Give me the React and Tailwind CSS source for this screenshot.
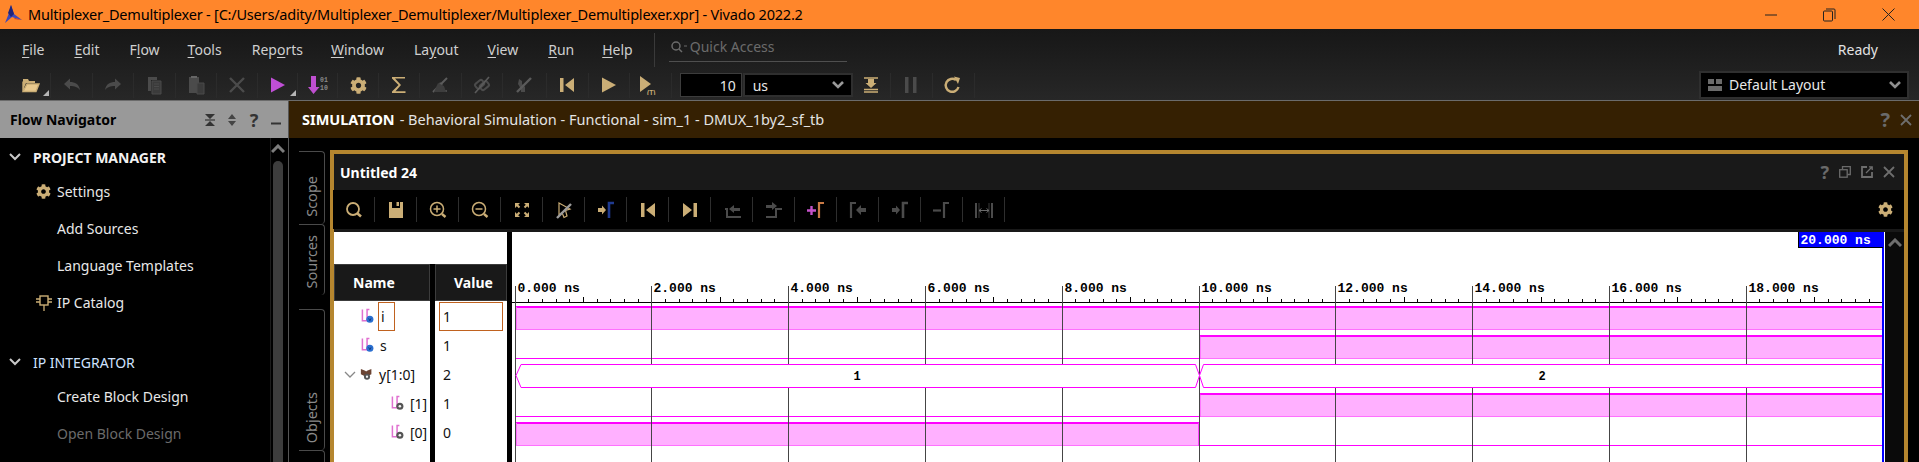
import React from "react";
import { FaCog } from "react-icons/fa";

const TAN = "#cbae76";
const GR = "#4b4b4b";

const I = ({ children, w = 20, h = 20, vb }) => (
  <svg width={w} height={h} viewBox={vb || `0 0 ${w} ${h}`} fill="none">{children}</svg>
);

const Corner = () => (
  <span className="absolute right-[1px] bottom-[2px] w-0 h-0 border-l-[6px] border-l-transparent border-b-[6px] border-b-[#b5b5b5]" />
);

const Folder = () => (
  <I>
    <path d="M3 4h5l1 2h6v2H6L3.500 14H3z" fill={TAN} />
    <path d="M3 16V6.500M7 9h12l-3 7.500H3z" stroke={TAN} strokeWidth="1.400" fill="#e8c98e" />
  </I>
);
const Undo = ({ flip }) => (
  <I>
    <g transform={flip ? "translate(20 0) scale(-1 1)" : undefined}>
      <path d="M2 9l6-5.500V7c5 0 9 2 10 8-2.500-3-5-4-10-4v3.500z" fill={GR} />
    </g>
  </I>
);
const Doc = () => (
  <I>
    <path d="M4 2h9v3H7v11H4z" fill={GR} />
    <path d="M8 6h9v13H8z" fill="#3b3b3b" stroke={GR} />
    <path d="M10 9h5M10 11.500h5M10 14h5" stroke={GR} />
  </I>
);
const Paste = () => (
  <I>
    <path d="M3 2h10v16H3z" fill={GR} />
    <path d="M5 1h6v2H5z" fill="#666" />
    <path d="M11 8h7v11h-7z" fill="#3b3b3b" stroke={GR} />
  </I>
);
const Cross = ({ c = GR, s = 2.400 }) => (
  <I><path d="M3 3l14 14M17 3L3 17" stroke={c} strokeWidth={s} /></I>
);
const Play = ({ c = TAN }) => (
  <I><path d="M3 2.500L17 10 3 17.500z" fill={c} /></I>
);
const Bits = () => (
  <I w={24}>
    <path d="M5 1h5v11h3.500L7.500 19 2 12h3z" fill="#bf4fd0" />
    <text x="14" y="7" fontSize="6.500" fontFamily="'Liberation Mono', monospace" fontWeight="700" fill="#8a8a8a">01</text>
    <text x="14" y="15" fontSize="6.500" fontFamily="'Liberation Mono', monospace" fontWeight="700" fill="#8a8a8a">10</text>
  </I>
);
const Sigma = () => (
  <I><path d="M16 3.500V2H3v1.500L9.500 10 3 16.500V18h13.500v-1.800H6.500L12 10 6 3.500z" fill={TAN} /></I>
);
const Tri = () => (
  <I>
    <path d="M4 17h13v-2H9l4-6-3-2z" fill={GR} />
    <path d="M3 17L17 3" stroke="#5c5c5c" strokeWidth="2" />
    <path d="M4 17l4-9 6 3 2 6z" fill="#3e3e3e" />
  </I>
);
const Chain = () => (
  <I>
    <rect x="3" y="6" width="9" height="6" rx="2" transform="rotate(-40 8 9)" stroke={GR} strokeWidth="2" />
    <rect x="8" y="8" width="9" height="6" rx="2" transform="rotate(-40 12 11)" stroke={GR} strokeWidth="2" />
    <path d="M3 18L17 2" stroke="#5a5a5a" strokeWidth="1.600" />
  </I>
);
const Wrench = () => (
  <I>
    <path d="M5 4l3 2v3l3 3v5H7v-3L4 9z" fill={GR} />
    <path d="M3 17L17 3" stroke="#5a5a5a" strokeWidth="2.400" />
  </I>
);
const Prev = () => (
  <I><path d="M3 3h3.500v14H3zM17 3v14L8 10z" fill={TAN} /></I>
);
const Next = () => (
  <I><path d="M13.500 3H17v14h-3.500zM3 3v14l9-7z" fill={TAN} /></I>
);
const PlayT = () => (
  <I w={24}>
    <path d="M2 1l11 8-11 8z" fill={TAN} />
    <text x="9" y="19.500" fontSize="6.500" fontWeight="700" fontFamily="'Liberation Sans', sans-serif" fill={TAN}>(T)</text>
  </I>
);
const Lines = () => (
  <I>
    <path d="M3 3h14M3 17h14M3 14.500h14" stroke={TAN} strokeWidth="1.300" />
    <path d="M7 4h6v4h2.500L10 13 4.500 8H7z" fill={TAN} />
  </I>
);
const Pause = () => (
  <I><path d="M4 2h3.500v16H4zM12 2h3.500v16H12z" fill={GR} /></I>
);
const Refresh = () => (
  <I>
    <path d="M15.500 12A6.500 6.500 0 1 1 13 5" stroke={TAN} strokeWidth="2.400" />
    <path d="M11 1.500l6 1.500-2 6z" fill={TAN} />
  </I>
);
const Search = () => (
  <I>
    <circle cx="9" cy="9" r="6" stroke={TAN} strokeWidth="1.800" />
    <path d="M13.500 13.500l3.500 3" stroke={TAN} strokeWidth="2.600" />
  </I>
);
const ZoomI = ({ plus }) => (
  <I>
    <circle cx="9" cy="9" r="6.500" stroke={TAN} strokeWidth="1.500" />
    <path d="M5.500 9h7" stroke={TAN} strokeWidth="1.500" />
    {plus && <path d="M9 5.500v7" stroke={TAN} strokeWidth="1.500" />}
    <path d="M14 14l3.500 3" stroke={TAN} strokeWidth="2.400" />
  </I>
);
const Floppy = () => (
  <I><path d="M3 2h3v6h8V2h3v16H3z" fill={TAN} /><path d="M10.500 2H13v4h-2.500z" fill={TAN} /></I>
);
const Fit = () => (
  <I>
    <path d="M3 3h5L3 8zM17 3h-5l5 5zM3 17h5l-5-5zM17 17h-5l5-5z" fill={TAN} />
    <path d="M4 4l3.500 3.500M16 4l-3.500 3.500M4 16l3.500-3.500M16 16l-3.500-3.500" stroke={TAN} strokeWidth="2" />
  </I>
);
const Cursor = () => (
  <I>
    <path d="M5 3l11 6-4.500 1.500L13 16l-3 1.500-2-5L5 15z" stroke={TAN} strokeWidth="1.200" />
    <path d="M3 18L17 4" stroke="#9c9c9c" strokeWidth="2.400" />
  </I>
);
const Edge = ({ a = TAN, c = "#1f3a8f" }) => (
  <I>
    <path d="M2 8h4V5.500l4 4.500-4 4.500V12H2z" fill={a} />
    <path d="M13 18V3h5" stroke={c} strokeWidth="2.600" />
  </I>
);
const StepL = () => (
  <I w={24}>
    <path d="M5 9h2v8h14" stroke={GR} strokeWidth="2" />
    <path d="M20 8h-6V5l-5 4 5 4v-2h6z" fill={GR} />
  </I>
);
const StepR = () => (
  <I w={24}>
    <path d="M4 17h10V9h6" stroke={GR} strokeWidth="2" />
    <path d="M4 5h6V2l5 4-5 4V8H4z" fill={GR} />
  </I>
);
const AddM = () => (
  <I w={24}>
    <path d="M3 10.500h9M7.500 6v9" stroke="#c552c9" strokeWidth="2.400" />
    <path d="M15 18V3h5" stroke="#c97a45" strokeWidth="2.200" />
  </I>
);
const EdgeL = () => (
  <I w={24}>
    <path d="M5 18V3h5" stroke={GR} strokeWidth="2.200" />
    <path d="M20 8h-5V5l-5 5 5 5v-3h5z" fill={GR} />
  </I>
);
const Minus = () => (
  <I w={24}>
    <path d="M3 10.500h8" stroke={GR} strokeWidth="2.200" />
    <path d="M14 18V3h5" stroke={GR} strokeWidth="2.200" />
  </I>
);
const Meas = () => (
  <I w={24}>
    <path d="M4 3v15M20 3v15" stroke={GR} strokeWidth="2" />
    <path d="M7 3v15M17 3v15" stroke="#383838" strokeWidth="1" />
    <path d="M7 10.500h10M7 10.500l2.500-2M7 10.500l2.500 2M17 10.500l-2.500-2M17 10.500l-2.500 2" stroke="#6a6a6a" />
  </I>
);

const Chev = ({ c = "#8f8f8f", w = 14, s = 2 }) => (
  <svg width={w} height="10" viewBox="0 0 14 10" fill="none"><path d="M2 2l5 5 5-5" stroke={c} strokeWidth={s} /></svg>
);
const ChevUp = ({ c = "#7c7c7c" }) => (
  <svg width="14" height="10" viewBox="0 0 14 10" fill="none"><path d="M1 8l6-6 6 6" stroke={c} strokeWidth="3" /></svg>
);

const Btn = ({ children, corner, sep = "border-[#2b2b2b]", w = "w-[41.4px]" }) => (
  <div className={`relative ${w} h-[25px] flex items-center justify-center border-r ${sep} shrink-0`}>
    {children}
    {corner && <Corner />}
  </div>
);
const WBtn = ({ children }) => (
  <div className="w-[42px] h-[25px] flex items-center justify-center border-r border-[#2e2e2e] shrink-0">{children}</div>
);

const U = ({ children }) => <span className="underline underline-offset-2">{children}</span>;

const menus = [
  [<><U>F</U>ile</>, "ml-[22px]"],
  [<><U>E</U>dit</>, "ml-[30px]"],
  [<>F<U>l</U>ow</>, "ml-[30px]"],
  [<><U>T</U>ools</>, "ml-[28px]"],
  [<>Rep<U>o</U>rts</>, "ml-[30px]"],
  [<><U>W</U>indow</>, "ml-[28px]"],
  [<>La<U>y</U>out</>, "ml-[30px]"],
  [<><U>V</U>iew</>, "ml-[29px]"],
  [<><U>R</U>un</>, "ml-[30px]"],
  [<><U>H</U>elp</>, "ml-[28px]"],
];

const NavRow = ({ h, cls = "", color = "text-[#e8e8e8]", icon, children }) => (
  <div className={`flex items-center ${h} ${cls} ${color}`}>
    <div className="w-[57px] pl-[30px] flex items-center justify-center shrink-0">{icon}</div>
    <span>{children}</span>
  </div>
);
const NavHead = ({ h, cls = "", bold, children }) => (
  <div className={`flex items-center ${h} ${cls} ${bold ? "font-bold text-[#f2f2f2]" : "text-[#cfe2ff]"}`}>
    <div className="w-[33px] pl-[8px] shrink-0"><Chev c="#c8c8c8" /></div>
    <span>{children}</span>
  </div>
);

const VTab = ({ h, cls = "", children }) => (
  <div className={`w-[26px] ${h} ${cls} pb-[7px] border-t border-r border-[#4a4a4a] rounded-tr-[4px] rounded-br-[4px] flex items-end justify-center shrink-0`}>
    <span className="text-[#8a8a8a] text-[14.5px] [writing-mode:vertical-rl] rotate-180 leading-none">{children}</span>
  </div>
);

const SigIcon = ({ dot = "#2a6fd0" }) => (
  <svg width="15" height="21" viewBox="0 0 15 21" fill="none">
    <path d="M1.500 3v12h5V3h2.500" stroke="#e070d0" strokeWidth="1.600" fill="none" />
    <circle cx="9.500" cy="13.500" r="3.800" fill={dot} />
    {dot !== "#555" && <path d="M8.200 12.500l1.300 2.500 1.300-2.500" stroke="#0b2a66" strokeWidth=".8" />}
    {dot === "#555" && <circle cx="9.500" cy="13.500" r="1.400" fill="#f5f5f5" />}
  </svg>
);
const BusIcon = () => (
  <svg width="16" height="18" viewBox="0 0 16 18" fill="none">
    <path d="M1 2l5 2 1 1 1-1 5-2v6l-4 2H5L1 8z" fill="#6b4433" />
    <circle cx="8" cy="11" r="3.500" fill="#555" />
    <circle cx="8" cy="11" r="1.300" fill="#f5f5f5" />
  </svg>
);

const rowsN = [
  { name: "i", val: "1", ic: <SigIcon />, pl: "pl-[27px]", focus: true },
  { name: "s", val: "1", ic: <SigIcon />, pl: "pl-[27px]" },
  { name: "y[1:0]", val: "2", ic: <BusIcon />, pl: "pl-[26px]", exp: true },
  { name: "[1]", val: "1", ic: <SigIcon dot="#555" />, pl: "pl-[57px]" },
  { name: "[0]", val: "0", ic: <SigIcon dot="#555" />, pl: "pl-[57px]" },
];

const X0 = 515;
const PX = 68.4;
const xAt = (ns) => X0 + ns * PX;
const MONO = "'Liberation Mono', 'DejaVu Sans Mono', monospace";

const High = ({ a, b, top }) => (
  <g>
    <rect x={a} y={top} width={b - a} height={23} fill="#ffb0ff" />
    <rect x={a} y={top - 1} width={b - a} height={2} fill="#ff00ff" />
    <rect x={a} y={top + 22} width={b - a} height={1} fill="#ff70ff" />
  </g>
);
const Low = ({ a, b, y }) => <rect x={a} y={y} width={b - a} height={1} fill="#ff00ff" />;

const Wave = () => {
  const mid = 1199.5;
  const end = 1882;
  const st = 516;
  const ticks = [];
  for (let i = 0; i < 100; i++) {
    if (i % 10 === 0) continue;
    const x = Math.floor(xAt(i * 0.2)) + 0.5;
    if (x > end) break;
    const big = i % 5 === 0;
    ticks.push(<line key={i} x1={x} x2={x} y1={big ? 297 : 299} y2={302} stroke="#000" />);
  }
  const majors = [0, 2, 4, 6, 8, 10, 12, 14, 16, 18];
  return (
    <svg width="1373" height="230" viewBox="512 232 1373 230" className="block">
      <rect x="512" y="232" width="1373" height="230" fill="#fff" />
      <rect x="512" y="302" width="1370" height="1" fill="#000" />
      {ticks}
      <High a={st} b={end} top={307} />
      <Low a={st} b={mid} y={358} />
      <High a={mid} b={end} top={336} />
      <Low a={st} b={mid} y={416} />
      <High a={mid} b={end} top={394} />
      <High a={st} b={mid} top={423} />
      <Low a={mid} b={end} y={445} />
      <rect x={st} y={307} width="1" height="23" fill="#ff70ff" />
      <rect x={st} y={423} width="1" height="23" fill="#ff70ff" />
      <rect x={mid - 0.5} y={336} width="1.500" height="23" fill="#ff40ff" />
      <rect x={mid - 0.5} y={394} width="1.500" height="23" fill="#ff40ff" />
      <rect x={mid - 1.5} y={423} width="1.500" height="23" fill="#ff40ff" />
      {majors.map((m) => {
        const x = Math.floor(xAt(m)) + 0.5;
        return (
          <g key={m}>
            <line x1={x} x2={x} y1={286} y2={462} stroke="#454545" />
            <text x={x + 2} y={292} fontFamily={MONO} fontSize="13" fontWeight="700" fill="#000">
              {m.toFixed(3)} ns
            </text>
          </g>
        );
      })}
      <polygon points={`${st + 5},364.500 1195.500,364.500 1199.500,375.500 1195.500,387.500 ${st + 5},387.500 ${st},375.500`} fill="#fff" stroke="#ff00ff" />
      <polygon points={`1203.500,364.500 1882,364.500 1882,387.500 1203.500,387.500 1199.500,375.500`} fill="#fff" stroke="#ff00ff" />
      <text x="857" y="379.500" textAnchor="middle" fontFamily={MONO} fontSize="12" fontWeight="700" fill="#000">1</text>
      <text x="1542" y="379.500" textAnchor="middle" fontFamily={MONO} fontSize="12" fontWeight="700" fill="#000">2</text>
      <rect x="1882" y="232" width="3" height="230" fill="#0000ff" />
      <rect x="1884" y="232" width="1" height="230" fill="#fff" />
      <rect x="1798" y="232" width="85" height="16" fill="#000" />
      <rect x="1799" y="232" width="84" height="15" fill="#0000ff" />
      <text x="1800.500" y="244" fontFamily={MONO} fontSize="13" fontWeight="700" fill="#fff">20.000 ns</text>
    </svg>
  );
};

const Q = ({ cls = "text-[18px]" }) => <span className={`font-bold leading-none text-[#6a6a6a] ${cls}`}>?</span>;
const SmallX = () => (
  <svg width="12" height="12" viewBox="0 0 12 12" fill="none"><path d="M1 1l10 10M11 1L1 11" stroke="#6e6e6e" strokeWidth="1.800" /></svg>
);

export default function App() {
  return (
    <div className="w-[1919px] h-[462px] overflow-hidden flex flex-col bg-black text-[14px] font-['Noto_Sans','Open_Sans',sans-serif]">
      {/* title bar */}
      <div className="h-[29px] shrink-0 bg-[#ff862b] flex items-center text-black">
        <svg width="22" height="22" viewBox="0 0 22 22" className="ml-[2px] mr-[4px]" fill="none">
          <path d="M9 1l3 9 8 6-7-2-3-1-7 6 4-10z" fill="#3f49b8" />
          <path d="M9 1l3 9-3 3-3-4z" fill="#20247a" />
          <path d="M13 14l7 2-8-1z" fill="#c0392b" />
        </svg>
        <span className="text-[14.5px] tracking-[-0.2px] whitespace-nowrap">Multiplexer_Demultiplexer - [C:/Users/adity/Multiplexer_Demultiplexer/Multiplexer_Demultiplexer.xpr] - Vivado 2022.2</span>
        <div className="ml-auto flex items-center">
          <div className="w-[58px] flex justify-center">
            <svg width="12" height="12" viewBox="0 0 12 12"><path d="M0 6h12" stroke="#222" /></svg>
          </div>
          <div className="w-[59px] flex justify-center">
            <svg width="13" height="14" viewBox="0 0 13 14" fill="none"><rect x=".5" y="3" width="9" height="10" rx="1" stroke="#222" /><path d="M3 1h8a1 1 0 0 1 1 1v9" stroke="#222" /></svg>
          </div>
          <div className="w-[58px] mr-[2px] flex justify-center">
            <svg width="13" height="13" viewBox="0 0 13 13" fill="none"><path d="M.5.5l12 12M12.500.5l-12 12" stroke="#222" /></svg>
          </div>
        </div>
      </div>

      {/* menu + toolbar */}
      <div className="h-[72px] shrink-0 flex flex-col bg-gradient-to-b from-[#171717] to-[#272727] border-b border-[#6b6b6b]">
        <div className="h-[41px] flex items-center text-[#cfcfcf]">
          {menus.map(([m, c], i) => <span key={i} className={`${c} whitespace-nowrap`}>{m}</span>)}
          <div className="ml-[21px] w-px h-[34px] bg-[#3a3a3a]" />
          <div className="ml-[14px] w-[178px] h-[30px] border-b border-[#4f4f4f] flex items-center text-[#6b6b6b] -mt-[5px]">
            <svg width="20" height="14" viewBox="0 0 20 14" className="ml-[1px]" fill="none"><circle cx="6" cy="6" r="4" stroke="#6b6b6b" strokeWidth="1.500" /><path d="M9 9l3 3" stroke="#6b6b6b" strokeWidth="1.500" /><path d="M14 6h3" stroke="#6b6b6b" /></svg>
            <span>Quick Access</span>
          </div>
          <span className="ml-auto mr-[41px] text-[#e2e2e2]">Ready</span>
        </div>
        <div className="h-[30px] flex items-center pl-[10px] relative">
          <Btn corner><Folder /></Btn>
          <Btn><Undo /></Btn>
          <Btn><Undo flip /></Btn>
          <Btn><Doc /></Btn>
          <Btn><Paste /></Btn>
          <Btn><Cross /></Btn>
          <Btn corner w="w-[40px]"><Play c="#c04fd6" /></Btn>
          <Btn w="w-[40px]"><Bits /></Btn>
          <Btn w="w-[41px]"><FaCog size={17} color={TAN} /></Btn>
          <Btn w="w-[40.4px]"><Sigma /></Btn>
          <Btn w="w-[42px]"><Tri /></Btn>
          <Btn><Chain /></Btn>
          <Btn w="w-[43.4px]"><Wrench /></Btn>
          <Btn w="w-[42.4px]"><Prev /></Btn>
          <Btn><Play /></Btn>
          <Btn><PlayT /></Btn>
          <div className="ml-[8px] w-[62px] h-[24px] bg-black border border-[#3c3c3c] flex items-center justify-end pr-[5px] text-[#e8e8e8]">10</div>
          <div className="ml-[1px] w-[110px] h-[24px] bg-black border-2 border-[#2f2f2f] flex items-center pl-[8px] text-[#e8e8e8]">
            us
            <span className="ml-auto mr-[6px]"><Chev c="#9a9a9a" w={14} s={2.600} /></span>
          </div>
          <Btn w="w-[38px]"><Lines /></Btn>
          <Btn w="w-[42px]"><Pause /></Btn>
          <Btn w="w-[42px]"><Refresh /></Btn>
          <div className="ml-auto mr-[10px] w-[210px] h-[28px] bg-black border-2 border-[#2f2f2f] flex items-center text-[#e8e8e8] mt-[-1px]">
            <svg width="14" height="14" viewBox="0 0 14 14" className="ml-[7px]"><path d="M0 1h6v5H0zM8 1h6v5H8zM0 8h14v5H0z" fill="#6b6b6b" /></svg>
            <span className="ml-[7px]">Default Layout</span>
            <span className="ml-auto mr-[5px]"><Chev c="#8f8f8f" s={2.600} /></span>
          </div>
        </div>
      </div>

      {/* body */}
      <div className="flex-1 min-h-0 flex">
        {/* flow navigator */}
        <div className="w-[288px] shrink-0 flex flex-col">
          <div className="h-[37px] shrink-0 bg-[#999999] flex items-center pl-[10px] text-black font-bold">
            <span>Flow Navigator</span>
            <div className="ml-auto flex items-center text-[#333]">
              <div className="w-[22px] flex justify-center">
                <svg width="12" height="14" viewBox="0 0 12 14"><path d="M1 1h10L6 6zM1 13h10L6 8z" fill="#333" /><path d="M1 6.500h10M1 7.500h10" stroke="#333" strokeWidth=".6" /></svg>
              </div>
              <div className="w-[22px] flex justify-center">
                <svg width="10" height="14" viewBox="0 0 10 14"><path d="M5 1l4 5H1zM5 13L1 8h8z" fill="#444" /></svg>
              </div>
              <span className="w-[22px] text-center text-[18px] leading-none text-[#333]">?</span>
              <div className="w-[22px] mr-[1px] flex justify-center">
                <svg width="12" height="12" viewBox="0 0 12 12"><path d="M1 9.500h10" stroke="#333" strokeWidth="2" /></svg>
              </div>
            </div>
          </div>
          <div className="flex-1 min-h-0 flex">
            <div className="flex-1 min-w-0 flex flex-col pt-[4px] whitespace-nowrap">
              <NavHead h="h-[30px]" bold>PROJECT MANAGER</NavHead>
              <NavRow h="h-[38px]" icon={<FaCog size={15} color={TAN} />}>Settings</NavRow>
              <NavRow h="h-[37px]">Add Sources</NavRow>
              <NavRow h="h-[37px]">Language Templates</NavRow>
              <NavRow h="h-[37px]" icon={
                <svg width="16" height="18" viewBox="0 0 16 18" fill="none"><rect x="4" y="2" width="8" height="9" stroke={TAN} strokeWidth="1.400" /><path d="M0 5h4M0 8h4M12 5h4M12 8h4M8 11v6" stroke={TAN} strokeWidth="1.300" /></svg>
              }>IP Catalog</NavRow>
              <NavHead h="h-[30px]" cls="mt-[26px]">IP INTEGRATOR</NavHead>
              <NavRow h="h-[38px]">Create Block Design</NavRow>
              <NavRow h="h-[37px]" color="text-[#6b6b6b]">Open Block Design</NavRow>
            </div>
            <div className="w-[18px] shrink-0 border-l border-[#1c1c1c] flex flex-col items-center pt-[6px] pr-[3px]">
              <ChevUp />
              <div className="mt-[7px] w-[10px] flex-1 bg-[#3d3d3d] rounded-t-[5px]" />
            </div>
          </div>
        </div>

        {/* simulation */}
        <div className="flex-1 min-w-0 flex flex-col border-l border-[#555]">
          <div className="h-[37px] shrink-0 bg-[#352002] flex items-center pl-[13px] text-[14.5px] text-[#e4e4e4] whitespace-nowrap">
            <span className="font-bold text-white">SIMULATION</span>
            <span className="ml-[5px]">- Behavioral Simulation - Functional - sim_1 - DMUX_1by2_sf_tb</span>
            <div className="ml-auto flex items-center gap-[10px] mr-[7px]">
              <Q cls="text-[20px]" />
              <SmallX />
            </div>
          </div>
          <div className="flex-1 min-h-0 flex pt-[12px] pl-[10px]">
            {/* vertical tabs */}
            <div className="w-[26px] shrink-0 flex flex-col pt-[1px]">
              <VTab h="h-[73px]">Scope</VTab>
              <VTab h="h-[71px]">Sources</VTab>
              <VTab h="h-[141px]" cls="mt-[14px]">Objects</VTab>
              <VTab h="h-[20px]"> </VTab>
            </div>
            {/* window */}
            <div className="ml-[5px] w-[1578px] shrink-0 border-t-4 border-x-4 border-[#b5862f] flex flex-col">
              <div className="h-[36px] shrink-0 bg-[#191919] flex items-center pl-[6px] font-bold text-white">
                <span>Untitled 24</span>
                <div className="ml-auto flex items-center gap-[10px] mr-[9px]">
                  <Q />
                  <svg width="12" height="12" viewBox="0 0 12 12" fill="none"><rect x=".7" y="3.700" width="7.500" height="7.500" stroke="#6a6a6a" strokeWidth="1.300" /><path d="M3.500 3V.7h7.800v7.800H8.500" stroke="#6a6a6a" strokeWidth="1.300" /></svg>
                  <svg width="12" height="12" viewBox="0 0 12 12" fill="none"><path d="M6 1H1v10h10V6" stroke="#6e6e6e" strokeWidth="1.800" /><path d="M5 7l6-6M8 .8h3.200V4" stroke="#6e6e6e" strokeWidth="1.300" /></svg>
                  <SmallX />
                </div>
              </div>
              <div className="h-[39px] shrink-0 bg-black flex items-center -ml-px">
                <WBtn><Search /></WBtn>
                <WBtn><Floppy /></WBtn>
                <WBtn><ZoomI plus /></WBtn>
                <WBtn><ZoomI /></WBtn>
                <WBtn><Fit /></WBtn>
                <WBtn><Cursor /></WBtn>
                <WBtn><Edge /></WBtn>
                <WBtn><Prev /></WBtn>
                <WBtn><Next /></WBtn>
                <WBtn><StepL /></WBtn>
                <WBtn><StepR /></WBtn>
                <WBtn><AddM /></WBtn>
                <WBtn><EdgeL /></WBtn>
                <WBtn><Edge a={GR} c={GR} /></WBtn>
                <WBtn><Minus /></WBtn>
                <WBtn><Meas /></WBtn>
                <div className="ml-auto mr-[11px]"><FaCog size={15} color={TAN} /></div>
              </div>
              <div className="h-[3px] shrink-0 bg-[#191919]" />
              <div className="flex-1 min-h-0 flex">
                {/* names */}
                <div className="w-[173px] shrink-0 flex flex-col">
                  <div className="h-[32px] shrink-0 bg-white" />
                  <div className="flex-1 min-h-0 flex gap-[5px]">
                    <div className="w-[96px] shrink-0 flex flex-col bg-white">
                      <div className="h-[37px] shrink-0 bg-[#191919] border border-[#3c3c3c] flex items-center pl-[18px] font-bold text-white">Name</div>
                      <div className="pt-px">
                        {rowsN.map((r) => (
                          <div key={r.name} className={`h-[29px] flex items-center relative ${r.pl} text-[#111]`}>
                            {r.exp && <span className="absolute left-[9px] top-[10px]"><Chev c="#888" w={14} s={1.300} /></span>}
                            <span className="shrink-0 w-[14px] flex justify-center">{r.ic}</span>
                            {r.focus ? (
                              <span className="ml-[3px] self-stretch w-[17px] border border-[#c0621f] flex items-center pl-[2px]">{r.name}</span>
                            ) : (
                              <span className="ml-[5px]">{r.name}</span>
                            )}
                          </div>
                        ))}
                      </div>
                    </div>
                    <div className="w-[72px] shrink-0 flex flex-col bg-white">
                      <div className="h-[37px] shrink-0 bg-[#191919] border border-[#3c3c3c] flex items-center pl-[18px] font-bold text-white">Value</div>
                      <div className="pt-px">
                        {rowsN.map((r) => (
                          <div key={r.name} className="h-[29px] flex items-center text-[#111]">
                            {r.focus ? (
                              <span className="mx-[4px] self-stretch w-[64px] border border-[#c0621f] flex items-center pl-[3px]">{r.val}</span>
                            ) : (
                              <span className="pl-[8px]">{r.val}</span>
                            )}
                          </div>
                        ))}
                      </div>
                    </div>
                  </div>
                </div>
                <div className="w-[5px] shrink-0 bg-black" />
                <div className="w-[1373px] shrink-0"><Wave /></div>
                <div className="flex-1 min-w-0 bg-[#0a0a0a] flex justify-center pt-[6px]"><ChevUp c="#6e6e6e" /></div>
              </div>
            </div>
          </div>
        </div>
      </div>
    </div>
  );
}
